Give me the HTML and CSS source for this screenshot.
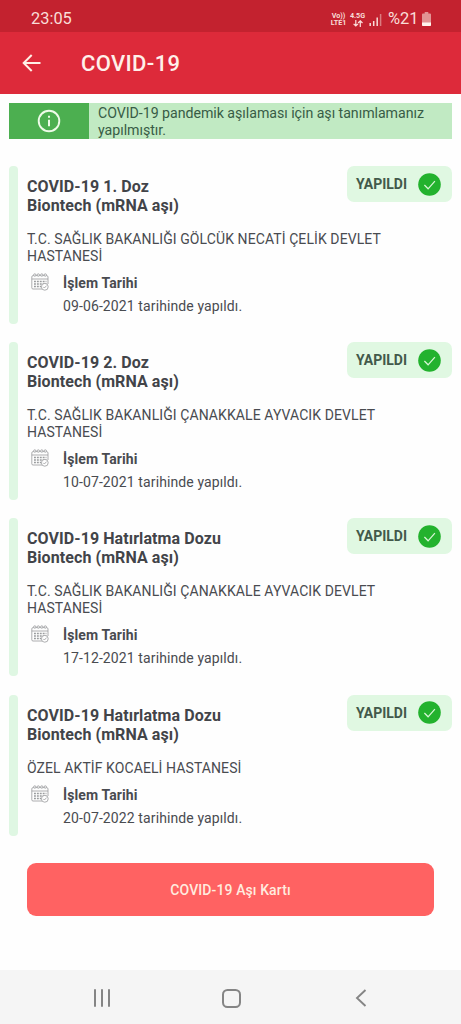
FILE: index.html
```html
<!DOCTYPE html>
<html lang="tr">
<head>
<meta charset="utf-8">
<title>COVID-19</title>
<link rel="stylesheet" href="styles.css">
</head>
<body>
<svg class="defs" width="0" height="0" aria-hidden="true">
  <symbol id="calendar" viewBox="0 0 18 18">
    <g fill="none" stroke="#999b9d" stroke-width=".8">
      <path d="M11 16H2Q.8 16 .8 14.8V4Q.8 2.6 2 2.6H15.6Q17 2.6 17 4V11M.8 6H17"/>
      <g fill="#fefefe"><circle cx="3.800" cy="2" r="1.200"/><circle cx="7.300" cy="2" r="1.200"/><circle cx="10.800" cy="2" r="1.200"/><circle cx="14.300" cy="2" r="1.200"/></g>
    </g>
    <path d="M3 8.400h12.400M3 11h12.400M3 13.600h7" fill="none" stroke="#999b9d" stroke-width="1.500" stroke-dasharray="1.900 1"/>
    <g fill="#fefefe" stroke="#999b9d" stroke-width=".8"><circle cx="13.800" cy="13.800" r="3.400"/><path d="M12.200 13.800l1.200 1.200 2.200-2.400" fill="none"/></g>
  </symbol>
  <symbol id="check" viewBox="0 0 23 23">
    <circle cx="11.5" cy="11.5" r="11.3" fill="#23b22e"/>
    <path d="M6.4 12l3.7 3.8 6.8-7.6" fill="none" stroke="#d8f5d6" stroke-width="1.25"/>
  </symbol>
</svg>
<div class="statusbar">
  <span class="clock">23:05</span>
  <div class="indicators">
    <div class="net volte"><span>Vo))</span><span>LTE1</span></div>
    <div class="net mobile"><span>4.5G</span>
      <svg width="10" height="7" viewBox="0 0 10 7"><path d="M2.8 0v5.8M.6 3.8l2.2 2.2L5 3.8M7.3 7V1M5.1 3l2.2-2.2L9.5 3" fill="none" stroke="#fbe0dc" stroke-width="1.2"/></svg>
    </div>
    <svg class="signal" width="13" height="13" viewBox="0 0 13 13"><path d="M1.2 13v-3M4.7 13V8M8.2 13V4.5" stroke="#f8dcd8" stroke-width="1.5"/><path d="M11.6 13V1" stroke="#da7c80" stroke-width="1.5"/></svg>
    <span class="percent">%21</span>
    <svg class="battery" width="9" height="14" viewBox="0 0 9 14"><path d="M2.7 0h3.6v1.4H8a1 1 0 0 1 1 1V13a1 1 0 0 1-1 1H1a1 1 0 0 1-1-1V2.400a1 1 0 0 1 1-1h1.700z" fill="#e29494"/><path d="M0 10.500h9V13a1 1 0 0 1-1 1H1a1 1 0 0 1-1-1z" fill="#fff4ed"/></svg>
  </div>
</div>
<header class="appbar">
  <svg width="19" height="18" viewBox="0 0 19 18"><path d="M18.500 9H2M9.700 1L1.700 9l8 8" fill="none" stroke="#fff0e6" stroke-width="2"/></svg>
  <h1>COVID-19</h1>
</header>
<main>
  <div class="notice">
    <div class="notice-icon"><svg width="24" height="24" viewBox="0 0 24 24"><circle cx="12" cy="12" r="10.300" fill="none" stroke="#eefbe8" stroke-width="1.900"/><path d="M12 10.800v6.500M12 6.700v2.100" stroke="#eefbe8" stroke-width="2"/></svg></div>
    <p>COVID-19 pandemik aşılaması için aşı tanımlamanız<br>yapılmıştır.</p>
  </div>
  <section class="doses">
    <article class="dose">
      <div class="top"><h2>COVID-19 1. Doz<br>Biontech (mRNA aşı)</h2><div class="badge">YAPILDI<svg width="23" height="23"><use href="#check"/></svg></div></div>
      <p class="place">T.C. SAĞLIK BAKANLIĞI GÖLCÜK NECATİ ÇELİK DEVLET<br>HASTANESİ</p>
      <div class="date"><svg width="18" height="18"><use href="#calendar"/></svg><div><h3>İşlem Tarihi</h3><p>09-06-2021 tarihinde yapıldı.</p></div></div>
    </article>
    <article class="dose">
      <div class="top"><h2>COVID-19 2. Doz<br>Biontech (mRNA aşı)</h2><div class="badge">YAPILDI<svg width="23" height="23"><use href="#check"/></svg></div></div>
      <p class="place">T.C. SAĞLIK BAKANLIĞI ÇANAKKALE AYVACIK DEVLET<br>HASTANESİ</p>
      <div class="date"><svg width="18" height="18"><use href="#calendar"/></svg><div><h3>İşlem Tarihi</h3><p>10-07-2021 tarihinde yapıldı.</p></div></div>
    </article>
    <article class="dose">
      <div class="top"><h2>COVID-19 Hatırlatma Dozu<br>Biontech (mRNA aşı)</h2><div class="badge">YAPILDI<svg width="23" height="23"><use href="#check"/></svg></div></div>
      <p class="place">T.C. SAĞLIK BAKANLIĞI ÇANAKKALE AYVACIK DEVLET<br>HASTANESİ</p>
      <div class="date"><svg width="18" height="18"><use href="#calendar"/></svg><div><h3>İşlem Tarihi</h3><p>17-12-2021 tarihinde yapıldı.</p></div></div>
    </article>
    <article class="dose">
      <div class="top"><h2>COVID-19 Hatırlatma Dozu<br>Biontech (mRNA aşı)</h2><div class="badge">YAPILDI<svg width="23" height="23"><use href="#check"/></svg></div></div>
      <p class="place">ÖZEL AKTİF KOCAELİ HASTANESİ</p>
      <div class="date"><svg width="18" height="18"><use href="#calendar"/></svg><div><h3>İşlem Tarihi</h3><p>20-07-2022 tarihinde yapıldı.</p></div></div>
    </article>
  </section>
  <button class="card-button">COVID-19 Aşı Kartı</button>
</main>
<nav class="navbar">
  <svg width="18" height="18" viewBox="0 0 18 18"><path d="M2 1v16M9 1v16M16 1v16" stroke="#858585" stroke-width="2" stroke-linecap="round"/></svg>
  <svg width="19" height="19" viewBox="0 0 19 19"><rect x="1" y="1" width="17" height="17" rx="4.500" fill="none" stroke="#858585" stroke-width="2"/></svg>
  <svg width="18" height="18" viewBox="0 0 18 18"><path d="M13.500 1L5 9l8.500 8" fill="none" stroke="#858585" stroke-width="1.900"/></svg>
</nav>
</body>
</html>
```

FILE: styles.css
```css
* { box-sizing: border-box; }
body { margin: 0; height: 1024px; display: flex; flex-direction: column; background: #fefefe; font-family: Roboto, "Liberation Sans", sans-serif; color: #494b50; }
h1, h2, h3, p { margin: 0; white-space: nowrap; }
svg { flex: none; display: block; }
.defs { position: absolute; }
.statusbar { flex: none; height: 32px; padding: 5px 30px 0 31px; display: flex; justify-content: space-between; background: #c3222f; color: #f9ddd8; }
.clock { font-size: 16.400px; line-height: 28px; }
.indicators { display: flex; }
.net { display: flex; flex-direction: column; font-size: 7.200px; font-weight: 700; line-height: 7px; margin-top: 7px; align-items: center; }
.volte { width: 17px; }
.mobile { width: 15px; margin-left: 3px; }
.mobile svg { margin-top: 1px; }
.signal { margin: 8px 0 0 4px; }
.percent { font-size: 16.500px; line-height: 28px; margin-left: 6px; width: 31px; }
.battery { margin: 7px 0 0 3px; }
.appbar { flex: none; height: 62px; padding: 0 22px; display: flex; align-items: center; gap: 40px; background: #dd2a3a; color: #fff0ea; }
.appbar h1 { font-size: 22px; font-weight: 500; line-height: 28px; padding-top: 2px; letter-spacing: .35px; }
main { flex: 1; padding: 9px 9px 0; }
.notice { display: flex; height: 36px; background: #c1eac3; color: #385c46; }
.notice-icon { width: 80px; display: flex; align-items: center; justify-content: center; background: #4caf50; }
.notice p { padding: 2px 0 0 9px; font-size: 14.200px; line-height: 17px; letter-spacing: -.04px; }
.doses { display: flex; flex-direction: column; gap: 18.200px; padding-top: 27px; }
.dose { position: relative; height: 158px; padding-left: 18px; }
.dose::before { content: ""; position: absolute; left: 0; top: 0; bottom: 0; width: 9px; border-radius: 4px; background: #dff7e3; }
.dose:last-child { height: 141px; }
.top { display: flex; justify-content: space-between; height: 65px; }
.top h2 { padding-top: 11px; font-size: 16px; font-weight: 700; line-height: 19px; letter-spacing: .08px; color: #424449; }
.badge { display: flex; align-items: center; justify-content: space-between; width: 105px; height: 36px; padding: 0 11px 0 9px; border-radius: 7px; background: #e0f8e2; color: #42594a; font-size: 14px; font-weight: 700; }
.place { font-size: 14px; line-height: 17px; letter-spacing: .09px; }
.date { display: flex; gap: 14px; padding: 8px 0 0 4px; }
.date h3 { font-size: 14px; font-weight: 700; line-height: 23px; margin-top: -1px; letter-spacing: .1px; }
.date p { font-size: 14px; line-height: 23px; letter-spacing: .11px; }
.card-button { display: block; width: 407px; height: 53px; margin: 27px 0 0 18px; padding: 0; border: 0; border-radius: 9px; background: #ff6262; color: #ffebdf; font: 500 14px/54px Roboto, sans-serif; letter-spacing: .1px; }
.navbar { flex: none; height: 54px; padding: 2px 91px 0 93px; display: flex; align-items: center; justify-content: space-between; background: #f5f5f5; }
```
